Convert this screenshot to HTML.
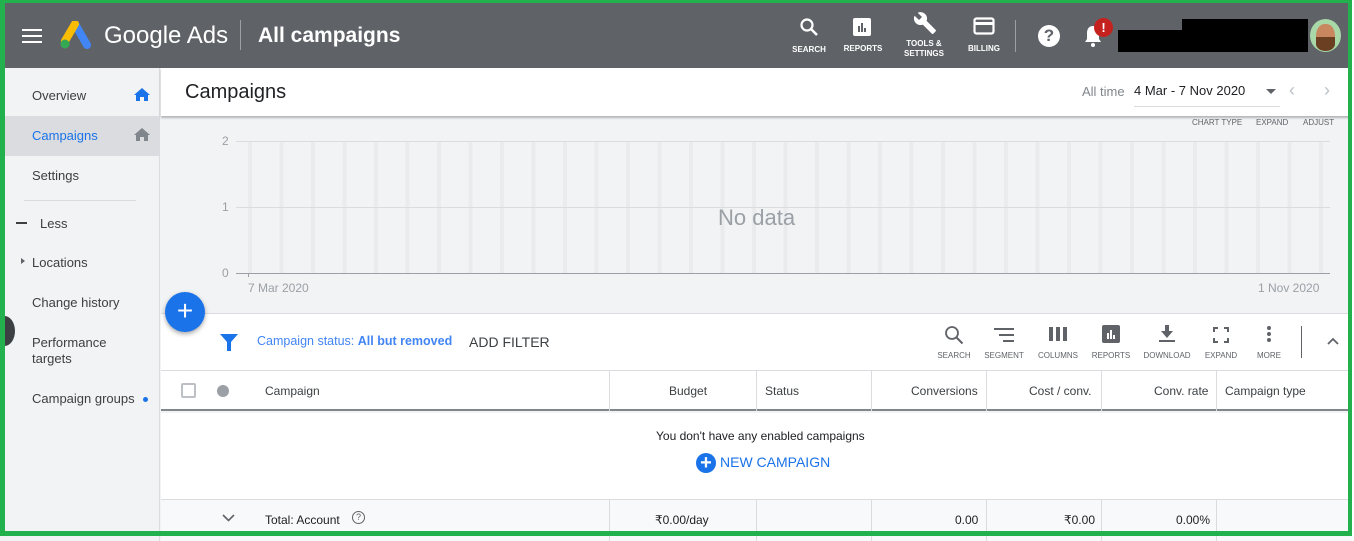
<!DOCTYPE html>
<html><head><meta charset="utf-8"><style>
*{box-sizing:border-box;margin:0;padding:0}
body{width:1354px;height:541px;overflow:hidden;background:#f1f3f4;font-family:"Liberation Sans",Arial,sans-serif;position:relative;color:#3c4043}
.a{position:absolute}
.hdr{left:0;top:0;width:1354px;height:68px;background:#5f6368}
.side{left:0;top:68px;width:160px;height:473px;background:#f1f3f4;border-right:1px solid #dadce0}
.nav{position:absolute;left:32px;font-size:13px;color:#3c4043}
.ico{color:#fff;font-size:8px;font-weight:bold;text-align:center;position:absolute}
.tl{font-size:8px;color:#5f6368;position:absolute;top:351px;text-align:center;width:60px}
.th{position:absolute;top:384px;font-size:12px;color:#3c4043}
.vl{position:absolute;width:1px;background:#dadce0}
</style></head><body>
<div class="a hdr"></div>
<div class="a" style="left:22px;top:29px;width:20px;height:2px;background:#fff;box-shadow:0 6px 0 #fff,0 12px 0 #fff"></div>
<svg class="a" style="left:59px;top:21px" width="32" height="28" viewBox="0 0 32 28"><path d="M16 3 L28 24" stroke="#4285f4" stroke-width="8" stroke-linecap="round"/><path d="M16 3 L6 20" stroke="#fbbc04" stroke-width="8" stroke-linecap="round"/><circle cx="6" cy="23" r="4.5" fill="#34a853"/></svg>
<div class="a" style="left:104px;top:22px;font-size:24px;color:#fff">Google Ads</div>
<div class="a" style="left:240px;top:20px;width:1px;height:30px;background:#9aa0a6"></div>
<div class="a" style="left:258px;top:24px;font-size:21px;color:#fff;font-weight:bold">All campaigns</div>
<svg class="a" style="left:799px;top:17px" width="20" height="20" viewBox="0 0 20 20"><circle cx="8" cy="8" r="5.5" stroke="#fff" stroke-width="2.2" fill="none"/><path d="M12 12l6 6" stroke="#fff" stroke-width="2.6"/></svg>
<div class="ico" style="left:789px;top:45px;width:40px">SEARCH</div>
<svg class="a" style="left:852px;top:17px" width="20" height="20"><rect x="1" y="1" width="18" height="18" rx="2" fill="#fff"/><rect x="6" y="9" width="2" height="6" fill="#5f6368"/><rect x="9" y="6" width="2" height="9" fill="#5f6368"/><rect x="12" y="11" width="2" height="4" fill="#5f6368"/></svg>
<div class="ico" style="left:838px;top:44px;width:50px">REPORTS</div>
<svg class="a" style="left:912px;top:11px" width="26" height="24" viewBox="0 0 24 24"><path d="M22.7 19l-9.1-9.1c.9-2.3.4-5-1.5-6.9-2-2-5-2.4-7.4-1.3L9 6 6 9 1.6 4.7C.4 7.1.9 10.1 2.9 12.1c1.9 1.9 4.6 2.4 6.9 1.5l9.1 9.1c.4.4 1 .4 1.4 0l2.3-2.3c.5-.4.5-1.1.1-1.4z" fill="#fff"/></svg>
<div class="ico" style="left:894px;top:39px;width:60px;line-height:10px">TOOLS &amp;<br>SETTINGS</div>
<svg class="a" style="left:973px;top:17px" width="22" height="18"><rect x="1.5" y="1.5" width="19" height="15" rx="2" stroke="#fff" stroke-width="2.2" fill="none"/><rect x="1.5" y="5" width="19" height="3" fill="#fff"/></svg>
<div class="ico" style="left:959px;top:44px;width:50px">BILLING</div>
<div class="a" style="left:1015px;top:20px;width:1px;height:32px;background:#9aa0a6"></div>
<div class="a" style="left:1038px;top:25px;width:22px;height:22px;border-radius:50%;background:#fff;color:#5f6368;font-weight:bold;font-size:17px;text-align:center;line-height:22px">?</div>
<svg class="a" style="left:1083px;top:24px" width="20" height="24" viewBox="0 0 20 24"><path d="M10 2c-4 0-6 3-6 7v6l-2 3h16l-2-3V9c0-4-2-7-6-7z" fill="#fff"/><circle cx="10" cy="21" r="2" fill="#fff"/></svg>
<div class="a" style="left:1094px;top:18px;width:19px;height:19px;border-radius:50%;background:#c5221f;color:#fff;font-weight:bold;font-size:13px;text-align:center;line-height:19px">!</div>
<div class="a" style="left:1118px;top:30px;width:190px;height:22px;background:#000"></div>
<div class="a" style="left:1182px;top:19px;width:126px;height:14px;background:#000"></div>
<div class="a" style="left:1310px;top:19px;width:31px;height:33px;border-radius:50%;background:#a8d8a8;overflow:hidden"><div style="position:absolute;left:6px;top:5px;width:19px;height:26px;border-radius:45%;background:#c9875f"></div><div style="position:absolute;left:6px;top:18px;width:19px;height:14px;border-radius:0 0 50% 50%;background:#6b3f22"></div></div>

<div class="a side"></div>
<div class="a" style="left:4px;top:116px;width:156px;height:40px;background:#dadce0"></div>
<div class="nav" style="top:88px">Overview</div>
<svg class="a" style="left:134px;top:88px" width="16" height="14"><path d="M6 13V9h4v4h4V7h2L8 0 0 7h2v6z" fill="#1a73e8"/></svg>
<div class="nav" style="top:128px;color:#1a73e8">Campaigns</div>
<svg class="a" style="left:134px;top:128px" width="16" height="14"><path d="M6 13V9h4v4h4V7h2L8 0 0 7h2v6z" fill="#80868b"/></svg>
<div class="nav" style="top:168px">Settings</div>
<div class="a" style="left:24px;top:200px;width:112px;height:1px;background:#dadce0"></div>
<div class="a" style="left:16px;top:222px;width:11px;height:2px;background:#3c4043"></div>
<div class="nav" style="left:40px;top:216px">Less</div>
<div class="a" style="left:21px;top:258px;border-left:4px solid #5f6368;border-top:3.5px solid transparent;border-bottom:3.5px solid transparent"></div>
<div class="nav" style="top:255px">Locations</div>
<div class="nav" style="top:295px">Change history</div>
<div class="nav" style="top:335px;line-height:16px">Performance<br>targets</div>
<div class="nav" style="top:391px">Campaign groups</div>
<div class="a" style="left:143px;top:397px;width:5px;height:5px;border-radius:50%;background:#1a73e8"></div>
<div class="a" style="left:-6px;top:316px;width:21px;height:30px;border-radius:50%;background:#3c4043"></div>

<div class="a" style="left:161px;top:68px;width:1193px;height:48px;background:#fff;box-shadow:0 2px 2px rgba(0,0,0,.25)"></div>
<div class="a" style="left:185px;top:81px;font-size:20px;color:#202124">Campaigns</div>
<div class="a" style="left:1082px;top:84px;font-size:13px;color:#80868b">All time</div>
<div class="a" style="left:1134px;top:83px;font-size:13px;color:#202124">4 Mar - 7 Nov 2020</div>
<div class="a" style="left:1134px;top:106px;width:146px;height:1px;background:#dadce0"></div>
<div class="a" style="left:1266px;top:89px;border-top:5px solid #5f6368;border-left:5px solid transparent;border-right:5px solid transparent"></div>
<div class="a" style="left:1289px;top:80px;font-size:18px;color:#bdc1c6">‹</div>
<div class="a" style="left:1324px;top:80px;font-size:18px;color:#bdc1c6">›</div>

<div class="a" style="left:1192px;top:118px;font-size:8px;color:#5f6368">CHART TYPE</div>
<div class="a" style="left:1256px;top:118px;font-size:8px;color:#5f6368">EXPAND</div>
<div class="a" style="left:1303px;top:118px;font-size:8px;color:#5f6368">ADJUST</div>
<div class="a" style="left:248px;top:141px;width:1080px;height:132px;background:repeating-linear-gradient(90deg,#eaebed 0 4px,transparent 4px 31.5px)"></div>
<div class="a" style="left:236px;top:141px;width:1094px;height:1px;background:#dadce0"></div>
<div class="a" style="left:236px;top:207px;width:1094px;height:1px;background:#dadce0"></div>
<div class="a" style="left:236px;top:273px;width:1094px;height:1px;background:#9aa0a6"></div>
<div class="a" style="left:248px;top:273px;width:1px;height:4px;background:#9aa0a6"></div>
<div class="a" style="left:222px;top:134px;font-size:12px;color:#9aa0a6">2</div>
<div class="a" style="left:222px;top:200px;font-size:12px;color:#9aa0a6">1</div>
<div class="a" style="left:222px;top:266px;font-size:12px;color:#9aa0a6">0</div>
<div class="a" style="left:248px;top:281px;font-size:12px;color:#9aa0a6">7 Mar 2020</div>
<div class="a" style="left:1258px;top:281px;font-size:12px;color:#9aa0a6">1 Nov 2020</div>
<div class="a" style="left:718px;top:205px;font-size:22px;color:#9aa0a6">No data</div>

<div class="a" style="left:161px;top:313px;width:1193px;height:57px;background:#fff;border-top:1px solid #dadce0"></div>
<svg class="a" style="left:220px;top:334px" width="18" height="17"><path d="M0 0h18l-7 8v9H7V8z" fill="#1a73e8"/></svg>
<div class="a" style="left:257px;top:334px;font-size:12.5px;color:#4285f4">Campaign status: <b>All but removed</b></div>
<div class="a" style="left:469px;top:334px;font-size:14px;color:#3c4043">ADD FILTER</div>
<svg class="a" style="left:944px;top:325px" width="20" height="20"><circle cx="8" cy="8" r="6" stroke="#5f6368" stroke-width="1.8" fill="none"/><path d="M12.5 12.5l6 6" stroke="#5f6368" stroke-width="2"/></svg>
<div class="tl" style="left:924px">SEARCH</div>
<svg class="a" style="left:994px;top:328px" width="20" height="14"><path d="M0 1h20M5 7h15M9 13h11" stroke="#5f6368" stroke-width="2"/></svg>
<div class="tl" style="left:974px">SEGMENT</div>
<svg class="a" style="left:1049px;top:327px" width="18" height="14"><rect x="0" y="0" width="4" height="14" fill="#5f6368"/><rect x="7" y="0" width="4" height="14" fill="#5f6368"/><rect x="14" y="0" width="4" height="14" fill="#5f6368"/></svg>
<div class="tl" style="left:1028px">COLUMNS</div>
<svg class="a" style="left:1102px;top:325px" width="18" height="18"><rect width="18" height="18" rx="2" fill="#5f6368"/><rect x="5" y="8" width="2" height="6" fill="#fff"/><rect x="8" y="5" width="2" height="9" fill="#fff"/><rect x="11" y="10" width="2" height="4" fill="#fff"/></svg>
<div class="tl" style="left:1081px">REPORTS</div>
<svg class="a" style="left:1159px;top:325px" width="16" height="18"><path d="M6 0h4v6h4l-6 7-6-7h4z" fill="#5f6368"/><rect y="15" width="16" height="2" fill="#5f6368"/></svg>
<div class="tl" style="left:1137px">DOWNLOAD</div>
<svg class="a" style="left:1213px;top:327px" width="16" height="16"><path d="M1 5V1h4M11 1h4v4M15 11v4h-4M5 15H1v-4" stroke="#5f6368" stroke-width="2" fill="none"/></svg>
<div class="tl" style="left:1191px">EXPAND</div>
<div class="a" style="left:1267px;top:326px;width:4px;height:4px;border-radius:50%;background:#5f6368;box-shadow:0 6px 0 #5f6368,0 12px 0 #5f6368"></div>
<div class="tl" style="left:1239px">MORE</div>
<div class="a" style="left:1301px;top:326px;width:1px;height:32px;background:#5f6368"></div>
<svg class="a" style="left:1327px;top:337px" width="12" height="8"><path d="M1 7l5-5 5 5" stroke="#5f6368" stroke-width="1.8" fill="none"/></svg>

<div class="a" style="left:165px;top:292px;width:40px;height:40px;border-radius:50%;background:#1a73e8;box-shadow:0 2px 5px rgba(0,0,0,.35);color:#fff;font-size:28px;text-align:center;line-height:38px">+</div>

<div class="a" style="left:161px;top:370px;width:1193px;height:41px;background:#fff;border-top:1px solid #dadce0;border-bottom:2px solid #80868b"></div>
<div class="a" style="left:181px;top:383px;width:15px;height:15px;border:2px solid #bdc1c6;border-radius:2px"></div>
<div class="a" style="left:217px;top:385px;width:12px;height:12px;border-radius:50%;background:#9aa0a6"></div>
<div class="th" style="left:265px">Campaign</div>
<div class="th" style="left:669px">Budget</div>
<div class="th" style="left:765px">Status</div>
<div class="th" style="left:911px">Conversions</div>
<div class="th" style="left:1029px">Cost / conv.</div>
<div class="th" style="left:1154px">Conv. rate</div>
<div class="th" style="left:1225px">Campaign type</div>
<div class="a" style="left:161px;top:413px;width:1193px;height:86px;background:#fff"></div>
<div class="a" style="left:656px;top:429px;font-size:12px;color:#202124">You don't have any enabled campaigns</div>
<div class="a" style="left:696px;top:453px;width:20px;height:20px;border-radius:50%;background:#1a73e8;color:#fff;font-size:20px;font-weight:bold;text-align:center;line-height:20px">+</div>
<div class="a" style="left:720px;top:454px;font-size:14px;color:#1a73e8">NEW CAMPAIGN</div>
<div class="a" style="left:161px;top:499px;width:1193px;height:42px;background:#f8f9fa;border-top:1px solid #dadce0"></div>
<svg class="a" style="left:222px;top:514px" width="13" height="8"><path d="M1 1l5.5 5.5L12 1" stroke="#5f6368" stroke-width="1.6" fill="none"/></svg>
<div class="a" style="left:265px;top:513px;font-size:12px;color:#202124">Total: Account</div>
<div class="a" style="left:352px;top:511px;width:13px;height:13px;border:1px solid #5f6368;border-radius:50%;font-size:9px;text-align:center;line-height:11px;color:#5f6368">?</div>
<div class="a" style="left:655px;top:513px;font-size:12px;color:#202124">₹0.00/day</div>
<div class="a" style="left:955px;top:513px;font-size:12px;color:#202124">0.00</div>
<div class="a" style="left:1064px;top:513px;font-size:12px;color:#202124">₹0.00</div>
<div class="a" style="left:1176px;top:513px;font-size:12px;color:#202124">0.00%</div>
<div class="vl" style="left:609px;top:371px;height:40px"></div><div class="vl" style="left:609px;top:499px;height:42px"></div>
<div class="vl" style="left:756px;top:371px;height:40px"></div><div class="vl" style="left:756px;top:499px;height:42px"></div>
<div class="vl" style="left:871px;top:371px;height:40px"></div><div class="vl" style="left:871px;top:499px;height:42px"></div>
<div class="vl" style="left:986px;top:371px;height:40px"></div><div class="vl" style="left:986px;top:499px;height:42px"></div>
<div class="vl" style="left:1101px;top:371px;height:40px"></div><div class="vl" style="left:1101px;top:499px;height:42px"></div>
<div class="vl" style="left:1216px;top:371px;height:40px"></div><div class="vl" style="left:1216px;top:499px;height:42px"></div>

<div class="a" style="left:0;top:0;width:1354px;height:3px;background:#22b14c"></div>
<div class="a" style="left:0;top:0;width:5px;height:536px;background:#22b14c"></div>
<div class="a" style="left:1348px;top:0;width:6px;height:536px;background:#22b14c"></div>
<div class="a" style="left:0;top:531px;width:1354px;height:5px;background:#22b14c"></div>
<div class="a" style="left:1352px;top:0;width:2px;height:541px;background:#fff"></div>
</body></html>
